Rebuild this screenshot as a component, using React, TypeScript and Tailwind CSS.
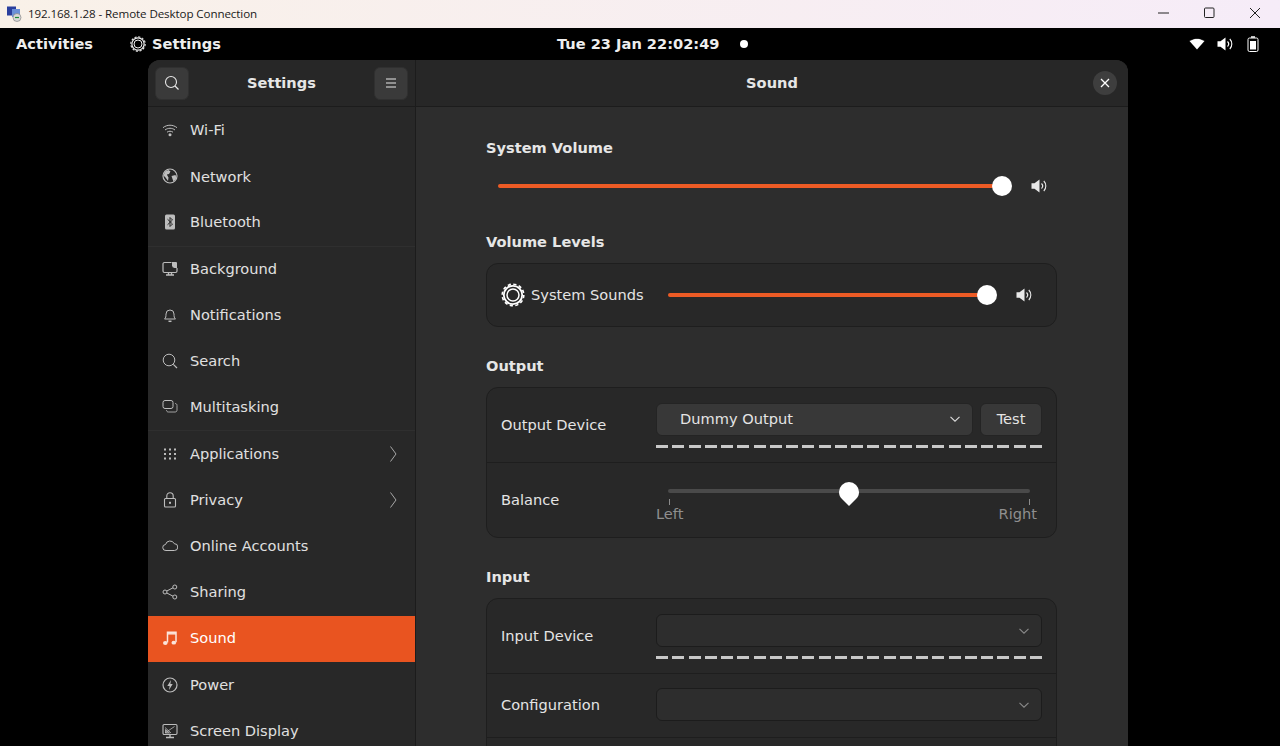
import type { ReactNode } from 'react';

const font = { fontFamily: '"DejaVu Sans", sans-serif' };

function Icon({ children, className = '' }: { children: ReactNode; className?: string }) {
  return (
    <svg viewBox="0 0 16 16" fill="none" stroke="currentColor" strokeWidth="1" className={`h-4 w-4 ${className}`}>
      {children}
    </svg>
  );
}

function Gear({ size }: { size: number }) {
  return (
    <svg viewBox="0 0 24 24" fill="none" stroke="currentColor" width={size} height={size}>
      <circle cx="12" cy="12" r="10.800" strokeWidth="1.600" strokeDasharray="3.200 2.450" />
      <circle cx="12" cy="12" r="9.200" strokeWidth="1.800" />
      <circle cx="12" cy="12" r="6" strokeWidth="1.500" />
    </svg>
  );
}

function Speaker({ className = '' }: { className?: string }) {
  return (
    <svg viewBox="0 0 16 16" fill="none" className={`h-4 w-4 ${className}`}>
      <path d="M0.500 5.300h3L8.500 1.500v13l-5-3.800h-3z" fill="currentColor" />
      <path d="M10.500 5.500a3.600 3.600 0 0 1 0 5" stroke="currentColor" strokeWidth="1.200" />
      <path d="M12.800 3a7.200 7.200 0 0 1 0 10" stroke="currentColor" strokeWidth="1.100" />
    </svg>
  );
}

function Chevron({ dim = false }: { dim?: boolean }) {
  return (
    <svg viewBox="0 0 12 8" fill="none" stroke="currentColor" className={`h-2 w-3 ${dim ? 'text-[#8a8a8a]' : 'text-[#dcdcdc]'}`}>
      <path d="M1.500 1.800 6 6.200l4.500-4.400" strokeWidth="1.100" />
    </svg>
  );
}

const navItems: { label: string; icon: ReactNode; more?: boolean; sepAfter?: boolean; active?: boolean }[] = [
  {
    label: 'Wi-Fi',
    icon: (
      <Icon>
        <path d="M1 5.700c4-3.300 10-3.300 14 0M3 8c2.900-2.300 7.100-2.300 10 0M5 10.200c1.800-1.300 4.200-1.300 6 0" />
        <circle cx="8" cy="12.700" r="1.500" fill="currentColor" stroke="none" />
      </Icon>
    ),
  },
  {
    label: 'Network',
    icon: (
      <Icon>
        <circle cx="8" cy="8" r="7" strokeWidth="1.200" />
        <path d="M3 3.500 6.500 2l2 1.500L7 6 4.800 6.500 6.500 9.500 6 13 3.500 9.500 1.500 7.500zM9.500 8l4-1 1 3-3 3.500-1-2.500z" fill="currentColor" stroke="none" />
      </Icon>
    ),
  },
  {
    label: 'Bluetooth',
    icon: (
      <Icon>
        <rect x="3" y="0.500" width="10" height="15" rx="1.500" fill="currentColor" stroke="none" />
        <path d="M5.500 5.200 10.500 10 8 12.500v-9L10.500 6 5.500 10.800" stroke="#272727" />
      </Icon>
    ),
    sepAfter: true,
  },
  {
    label: 'Background',
    icon: (
      <Icon>
        <path d="M9.500 1.500H2.500a1.500 1.500 0 0 0-1.500 1.500v7a1.500 1.500 0 0 0 1.500 1.500h11a1.500 1.500 0 0 0 1.500-1.500V7" strokeWidth="1.200" />
        <path d="M10 1h4a1 1 0 0 1 1 1v5h-2.500A2.500 2.500 0 0 1 10 4.500z" fill="currentColor" stroke="none" />
        <path d="M4 14h8M6.500 12v2M9.500 12v2" strokeWidth="1.400" />
      </Icon>
    ),
  },
  {
    label: 'Notifications',
    icon: (
      <Icon>
        <path d="M2.500 12c1.300-1 1.500-2.500 1.500-5a4 4 0 0 1 8 0c0 2.500.2 4 1.500 5z" />
        <path d="M6.500 14.300h3" strokeWidth="1.500" />
      </Icon>
    ),
  },
  {
    label: 'Search',
    icon: (
      <Icon>
        <circle cx="7" cy="7" r="5.800" />
        <path d="m11.300 11.300 3.700 3.700" strokeWidth="1.200" />
      </Icon>
    ),
  },
  {
    label: 'Multitasking',
    icon: (
      <Icon>
        <rect x="1" y="1.500" width="10" height="8" rx="2" />
        <path d="M13 4.500c1.300 0 2 .7 2 2v4.500c0 1.300-.7 2-2 2H6.500c-1.300 0-2-.7-2-2" opacity="0.8" />
      </Icon>
    ),
    sepAfter: true,
  },
  {
    label: 'Applications',
    icon: (
      <svg viewBox="0 0 16 16" fill="currentColor" className="h-4 w-4">
        {[3, 8, 13].flatMap((x) =>
          [3.500, 8, 12.500].map((y) => <rect key={`${x}-${y}`} x={x - 1} y={y - 1} width="2" height="2" />),
        )}
      </svg>
    ),
    more: true,
  },
  {
    label: 'Privacy',
    icon: (
      <Icon>
        <rect x="2.500" y="6.500" width="11" height="8.500" rx="1" strokeWidth="1.100" />
        <path d="M4.800 6.500V4a3.200 3.200 0 0 1 6.400 0v2.500" strokeWidth="1.100" />
        <rect x="7" y="9.800" width="2" height="2" fill="currentColor" stroke="none" />
      </Icon>
    ),
    more: true,
  },
  {
    label: 'Online Accounts',
    icon: (
      <Icon>
        <path d="M4 12.500a3 3 0 0 1-.5-6 4.700 4.700 0 0 1 8.800-.8 3.400 3.400 0 0 1 .2 6.800z" />
      </Icon>
    ),
  },
  {
    label: 'Sharing',
    icon: (
      <Icon>
        <circle cx="3" cy="8" r="2" />
        <circle cx="12.800" cy="3" r="2" />
        <circle cx="12.800" cy="13" r="2" />
        <path d="m4.800 7 6.200-3.200M4.800 9l6.200 3.200" />
      </Icon>
    ),
  },
  {
    label: 'Sound',
    icon: (
      <Icon>
        <path d="M5.500 12.500V2.200h8.500v10" strokeWidth="1.500" />
        <path d="M5.500 3.800H14" strokeWidth="1.500" />
        <ellipse cx="3.300" cy="13" rx="2.300" ry="1.900" fill="currentColor" stroke="none" />
        <ellipse cx="11.800" cy="12.700" rx="2.300" ry="1.900" fill="currentColor" stroke="none" />
      </Icon>
    ),
    active: true,
  },
  {
    label: 'Power',
    icon: (
      <Icon>
        <circle cx="8" cy="8" r="7" strokeWidth="1.200" />
        <path d="M9 3 5.300 9h2.300L7 13l3.700-6H8.400z" fill="currentColor" stroke="none" />
      </Icon>
    ),
  },
  {
    label: 'Screen Display',
    icon: (
      <Icon>
        <rect x="1" y="1.500" width="14" height="10" rx="1.200" strokeWidth="1.100" />
        <path d="M3 4.500 9 10M3.500 6.500v3.500h4z" stroke="currentColor" strokeWidth="0.800" fill="currentColor" fillOpacity="0.5" />
        <path d="M3 10 12.500 3.500" strokeWidth="0.800" />
        <path d="M4 14.500h8M8 12v2" strokeWidth="1.400" />
      </Icon>
    ),
  },
];

function Dashes() {
  return (
    <div className="flex h-[3px] w-[386px] justify-between">
      {Array.from({ length: 24 }).map((_, i) => (
        <span key={i} className="h-[3px] w-3 bg-[#c8c8c8]" />
      ))}
    </div>
  );
}

function Slider({ width }: { width: number }) {
  return (
    <div className="relative h-1 rounded-full bg-[#ed5b25]" style={{ width }}>
      <span className="absolute top-1/2 -right-2.5 h-5 w-5 -translate-y-1/2 rounded-full bg-white" />
    </div>
  );
}

function Heading({ children, className = '' }: { children: ReactNode; className?: string }) {
  return <h2 className={`absolute left-[486px] text-[14.600px] leading-5 font-bold text-[#e6e6e6] ${className}`}>{children}</h2>;
}

export default function App() {
  return (
    <div className="relative h-[746px] w-[1280px] overflow-hidden bg-black" style={font}>
      {/* rdp title bar */}
      <div className="flex h-7 items-center bg-gradient-to-r from-[#f9f1e8] to-[#f6ecf8] pl-[6px] text-[#1a1a1a]">
        <svg viewBox="0 0 16 16" className="h-4 w-4">
          <rect x="1" y="0.500" width="9" height="9" fill="#2a3f9e" />
          <rect x="6" y="3" width="8" height="8" fill="#6a8fd8" />
          <circle cx="11" cy="11.500" r="4" fill="#d8d8d8" stroke="#777" strokeWidth="0.600" />
          <path d="M9 11.500h4" stroke="#1d8a3a" strokeWidth="1.200" />
        </svg>
        <span className="ml-[6px] text-[11.600px] tracking-[-0.1px]" style={{ fontFamily: '"Open Sans", sans-serif' }}>
          192.168.1.28 - Remote Desktop Connection
        </span>
        <svg viewBox="0 0 12 12" className="absolute top-[6.500px] left-[1158px] h-3 w-3" stroke="#222" fill="none">
          <path d="M0 6h11" />
        </svg>
        <svg viewBox="0 0 12 12" className="absolute top-[6.500px] left-[1203px] h-3 w-3" stroke="#222" fill="none">
          <rect x="1.500" y="1" width="9.500" height="9.500" rx="1" />
        </svg>
        <svg viewBox="0 0 12 12" className="absolute top-[6.500px] left-[1249px] h-3 w-3" stroke="#222" fill="none">
          <path d="m1 1 10 10M11 1 1 11" />
        </svg>
      </div>

      {/* gnome top bar */}
      <div className="relative h-8 text-[14.600px] leading-8 font-bold text-[#eeeeee]">
        <span className="absolute left-4">Activities</span>
        <span className="absolute top-2 left-[130px]">
          <Gear size={16} />
        </span>
        <span className="absolute left-[152px]">Settings</span>
        <span className="absolute left-[557px]">Tue 23 Jan 22:02:49</span>
        <span className="absolute top-3 left-[740px] h-2 w-2 rounded-full bg-white" />
        <svg viewBox="0 0 16 16" className="absolute top-2 left-[1189px] h-4 w-4" fill="white">
          <path d="M0.500 5C4.500 1.500 11.500 1.500 15.500 5L8 13.500z" />
          <path d="M1.500 4.400c3.800-2.800 9.200-2.800 13 0" stroke="black" strokeWidth="0.800" fill="none" />
        </svg>
        <Speaker className="absolute top-2 left-[1217px] text-white" />
        <svg viewBox="0 0 16 16" className="absolute top-2 left-[1245px] h-4 w-4" fill="none" stroke="white">
          <rect x="3" y="2" width="10" height="13.500" rx="1.500" />
          <path d="M6 1h4" strokeWidth="1.500" />
          <rect x="5" y="5" width="6" height="8.500" fill="white" stroke="none" />
        </svg>
      </div>

      {/* settings window */}
      <div className="absolute top-[60px] left-[148px] flex h-[700px] w-[980px] flex-col overflow-hidden rounded-t-xl bg-[#2d2d2d]">
        <div className="flex h-[47px] shrink-0 border-b border-[#1c1c1c] bg-[#272727]">
          <div className="relative flex w-[267px] items-center justify-between px-[7px]">
            <button className="flex h-[33px] w-[34px] items-center justify-center rounded-[6px] border border-[#303030] bg-[#3a3a3a] text-[#e8e8e8]">
              <Icon>
                <circle cx="7" cy="7" r="5.500" strokeWidth="1.100" />
                <path d="m11 11 3.500 3.500" strokeWidth="1.200" />
              </Icon>
            </button>
            <span className="absolute left-[99px] text-[14.600px] font-bold text-[#e6e6e6]">Settings</span>
            <button className="flex h-[33px] w-[34px] items-center justify-center rounded-[6px] border border-[#303030] bg-[#3a3a3a] text-[#e8e8e8]">
              <svg viewBox="0 0 12 12" className="h-3 w-3" stroke="currentColor" fill="none">
                <path d="M1 2h10M1 6h10M1 10h10" />
              </svg>
            </button>
          </div>
          <div className="relative flex flex-1 items-center justify-center border-l border-[#1c1c1c]">
            <span className="text-[14.600px] font-bold text-[#e6e6e6]">Sound</span>
            <button className="absolute right-[11px] flex h-6 w-6 items-center justify-center rounded-full bg-[#3e3e3e] text-white">
              <svg viewBox="0 0 10 10" className="h-2.5 w-2.5" stroke="currentColor" fill="none" strokeWidth="1.300">
                <path d="m1 1 8 8M9 1 1 9" />
              </svg>
            </button>
          </div>
        </div>

        <div className="flex flex-1">
          <nav className="w-[268px] shrink-0 border-r border-[#1c1c1c] bg-[#282828] pt-px">
            {navItems.map((item) => (
              <div
                key={item.label}
                className={`relative flex h-[46.200px] items-center pb-[1.600px] pl-[14px] text-[14.600px] ${
                  item.active ? 'bg-[#e95420] text-white' : 'text-[#e0e0e0]'
                } ${item.sepAfter ? 'border-b border-[#2f2f2f]' : ''}`}
              >
                <span className={item.active ? 'text-[#fbe4da]' : 'text-[#bdbdbd]'}>{item.icon}</span>
                <span className="ml-3">{item.label}</span>
                {item.more && (
                  <svg viewBox="0 0 8 16" className="absolute right-[18px] h-4 w-2 text-[#a8a8a8]" fill="none" stroke="currentColor">
                    <path d="M1.500 0.500 7 8l-5.500 7.500" />
                  </svg>
                )}
              </div>
            ))}
          </nav>
        </div>
      </div>

      {/* sound panel content, page coordinates */}
      <div className="text-[14.600px] text-[#e4e4e4]">
        <Heading className="top-[138px]">System Volume</Heading>
        <div className="absolute top-[184px] left-[498px]">
          <Slider width={504} />
        </div>
        <Speaker className="absolute top-[178px] left-[1031px] text-[#e8e8e8]" />

        <Heading className="top-[232px]">Volume Levels</Heading>
        <div className="absolute top-[263px] left-[486px] flex h-[64px] w-[571px] items-center rounded-xl border border-[#1e1e1e] bg-[#282828]">
          <span className="ml-[14px] text-white">
            <Gear size={24} />
          </span>
          <span className="ml-[6px]">System Sounds</span>
          <div className="absolute left-[181px]">
            <Slider width={319} />
          </div>
          <Speaker className="absolute left-[529px] text-[#e8e8e8]" />
        </div>

        <Heading className="top-[356px]">Output</Heading>
        <div className="absolute top-[387px] left-[486px] h-[151px] w-[571px] rounded-xl border border-[#1e1e1e] bg-[#282828]">
          <span className="absolute top-[26px] left-[14px]">Output Device</span>
          <div className="absolute top-[15px] left-[169px] flex h-[33px] w-[317px] items-center justify-between rounded-[6px] border border-[#242424] bg-[#383838] pr-[11px] pb-[2px] pl-[23px]">
            <span>Dummy Output</span>
            <Chevron />
          </div>
          <div className="absolute top-[15px] left-[493px] flex h-[33px] w-[62px] items-center justify-center rounded-[6px] border border-[#242424] bg-[#383838] pb-[2px]">
            Test
          </div>
          <div className="absolute top-[57px] left-[169px]">
            <Dashes />
          </div>
          <div className="absolute top-[74px] left-0 h-px w-full bg-[#1e1e1e]" />
          <span className="absolute top-[101px] left-[14px]">Balance</span>
          <div className="absolute top-[101px] left-[181px] h-1 w-[362px] rounded-full bg-[#4a4a4a]" />
          <svg viewBox="0 0 20 24" className="absolute top-[94px] left-[352px] h-6 w-5" fill="white">
            <path d="M10 0a10 10 0 0 1 10 10c0 3-1 5-3 7l-7 7-7-7c-2-2-3-4-3-7A10 10 0 0 1 10 0z" />
          </svg>
          <span className="absolute top-[111px] left-[182px] h-[6px] w-px bg-[#8a8a8a]" />
          <span className="absolute top-[111px] left-[542px] h-[6px] w-px bg-[#8a8a8a]" />
          <span className="absolute top-[115px] left-[169px] text-[#8f8f8f]">Left</span>
          <span className="absolute top-[115px] right-[19px] text-[#8f8f8f]">Right</span>
        </div>

        <Heading className="top-[567px]">Input</Heading>
        <div className="absolute top-[598px] left-[486px] h-[180px] w-[571px] rounded-xl border border-[#1e1e1e] bg-[#282828]">
          <span className="absolute top-[26px] left-[14px]">Input Device</span>
          <div className="absolute top-[15px] left-[169px] flex h-[33px] w-[386px] items-center justify-end rounded-[6px] border border-[#1c1c1c] bg-[#2d2d2d] pr-[11px]">
            <Chevron dim />
          </div>
          <div className="absolute top-[57px] left-[169px]">
            <Dashes />
          </div>
          <div className="absolute top-[74px] left-0 h-px w-full bg-[#1e1e1e]" />
          <span className="absolute top-[95px] left-[14px]">Configuration</span>
          <div className="absolute top-[89px] left-[169px] flex h-[33px] w-[386px] items-center justify-end rounded-[6px] border border-[#1c1c1c] bg-[#2d2d2d] pr-[11px]">
            <Chevron dim />
          </div>
          <div className="absolute top-[138px] left-0 h-px w-full bg-[#1e1e1e]" />
        </div>
      </div>
    </div>
  );
}
